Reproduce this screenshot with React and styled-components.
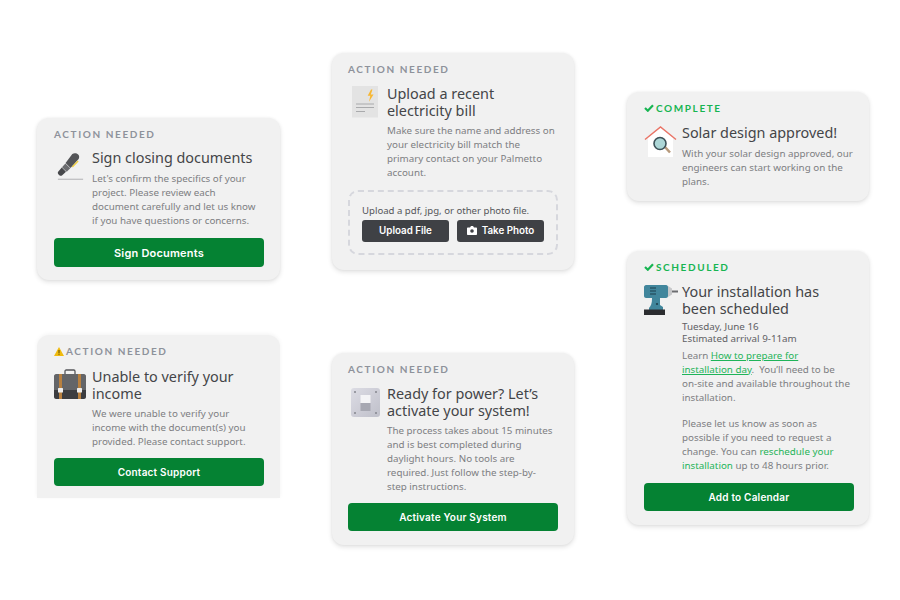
import React from "react";
import styled, { createGlobalStyle } from "styled-components";

const Global = createGlobalStyle`
  html, body { margin: 0; padding: 0; background: #fff; }
  body { font-family: "Lato", "Liberation Sans", sans-serif; }
`;

const Page = styled.div`
  width: 900px;
  height: 600px;
  overflow: hidden;
  display: flex;
  align-items: flex-start;
  gap: 52px;
  padding-left: 37px;
  box-sizing: border-box;
`;

const Column = styled.div`
  box-sizing: border-box;
  width: 243px;
  display: flex;
  flex-direction: column;
  padding-top: ${(p) => p.$top}px;
  padding-right: ${(p) => p.$pr ?? 0}px;
  gap: ${(p) => p.$gap}px;
`;

const Card = styled.section`
  box-sizing: border-box;
  height: ${(p) => p.$h}px;
  background: #f1f1f1;
  border-radius: ${(p) => (p.$cut ? "12px 12px 0 0" : "12px")};
  box-shadow: ${(p) =>
    p.$cut
      ? "0 -1px 4px rgba(0,0,0,0.05)"
      : "0 2px 5px rgba(0,0,0,0.12), 0 0 3px rgba(0,0,0,0.05)"};
  padding: 10px 16px 0 ${(p) => p.$pl ?? 17}px;
  display: flex;
  flex-direction: column;
`;

const Eyebrow = styled.div`
  display: flex;
  align-items: center;
  gap: 2px;
  height: 12px;
  font-size: 10px;
  font-weight: 700;
  letter-spacing: 1.6px;
  color: ${(p) => (p.$done ? "#17b552" : "#8e929b")};
`;

const Row = styled.div`
  display: flex;
  margin-top: ${(p) => p.$mt ?? 10}px;
`;

const IconSlot = styled.div`
  flex: 0 0 ${(p) => p.$w ?? 38}px;
  box-sizing: border-box;
  padding: ${(p) => p.$y ?? 0}px 0 0 ${(p) => p.$x ?? 0}px;
`;

const Body = styled.div`
  flex: 1;
  min-width: 0;
`;

const Title = styled.h3`
  margin: 0 0 ${(p) => (p.$two ? 4.5 : 5.5)}px;
  font-size: 14.4px;
  line-height: 16.5px;
  font-weight: 400;
  color: #444548;
  font-family: "Noto Sans", sans-serif;
  white-space: nowrap;
`;

const Text = styled.p`
  margin: 0;
  font-family: "Noto Sans", sans-serif;
  font-size: 9.8px;
  line-height: 14px;
  color: #7d7e82;
  white-space: nowrap;
`;

const DateText = styled(Text)`
  color: #5f6064;
  margin: -1px 0 4px;
  line-height: 12px;
`;

const Gap = styled.div`
  height: 12.5px;
`;

const Link = styled.a`
  color: #1fb459;
  text-decoration: ${(p) => (p.$under ? "underline" : "none")};
`;

const Primary = styled.button`
  box-sizing: border-box;
  display: block;
  width: 210px;
  height: ${(p) => p.$h ?? 28}px;
  margin-top: ${(p) => p.$mt ?? 10}px;
  border: 0;
  border-radius: 4px;
  background: #058233;
  color: #fff;
  font-family: "Inter", sans-serif;
  font-weight: 600;
  font-size: ${(p) => p.$fs ?? 10}px;
  letter-spacing: 0.2px;
`;

const DropZone = styled.div`
  box-sizing: border-box;
  width: 210px;
  height: 65px;
  margin-top: 10px;
  padding: 12px 10px 0 12px;
  border: 2px dashed #d6d7dd;
  border-radius: 10px;
`;

const DropText = styled.div`
  font-family: "Noto Sans", sans-serif;
  font-size: 9.6px;
  line-height: 13px;
  color: #55565a;
  white-space: nowrap;
`;

const DropButtons = styled.div`
  display: flex;
  gap: 8px;
  margin-top: 3px;
`;

const Dark = styled.button`
  box-sizing: border-box;
  width: 87px;
  height: 22px;
  border: 0;
  border-radius: 3px;
  padding: 0;
  background: #3f4145;
  color: #fff;
  font-family: "Inter", sans-serif;
  font-weight: 600;
  font-size: 9.8px;
  display: flex;
  align-items: center;
  justify-content: center;
  gap: 5px;
`;

const Pen = () => (
  <svg width="27" height="30" viewBox="0 0 30 32">
    <path d="M17 1.500c2-1.500 5-1 6.500.5s1.500 3.700.3 5.400L15 17l-5.500-5.500z" fill="#545558" />
    <path d="M9.300 12l5.500 5.500-4 3.700-5.200-5z" fill="#6b6c6f" />
    <path d="M5.300 16.500l4.700 4.700-4.200 4c-.9.8-2.300.8-3.200 0L1.500 24c-.8-.9-.8-2.200 0-3z" fill="#47484b" />
    <path d="M17 16l6.500-6.700" stroke="#f2cf3d" strokeWidth="1.400" fill="none" />
    <rect x="1" y="29" width="28" height="1.200" fill="#b5b6b8" />
  </svg>
);

const Briefcase = () => (
  <svg width="32" height="30" viewBox="0 0 32 30">
    <path d="M11 6V2.200C11 1.500 11.500 1 12.200 1h7.600c.7 0 1.200.5 1.200 1.200V6" fill="none" stroke="#55565a" strokeWidth="1.300" />
    <path d="M2 5h28c1 0 2 1 2 2v15H0V7c0-1 1-2 2-2z" fill="#646568" />
    <path d="M0 21h32v7c0 1-1 2-2 2H2c-1 0-2-1-2-2z" fill="#3c3d40" />
    <rect x="5" y="5" width="3" height="25" fill="#b8803f" />
    <rect x="24" y="5" width="3" height="25" fill="#b8803f" />
    <rect x="4" y="19" width="5" height="4.500" rx=".5" fill="#ededed" />
    <rect x="23" y="19" width="5" height="4.500" rx=".5" fill="#ededed" />
  </svg>
);

const Bill = () => (
  <svg width="27" height="32" viewBox="0 0 27 32">
    <rect width="26" height="31.500" fill="#e3e3e3" />
    <path d="M19 3.500l-3.300 6.300h2.600l-1.300 6 4.500-7.300h-2.700l1.700-5z" fill="#f7b733" />
    <path d="M4 18h18M4 21.500h18M4 25.500h9" stroke="#a9aaac" strokeWidth="1" />
  </svg>
);

const Toggle = () => (
  <svg width="29" height="29" viewBox="0 0 29 29">
    <defs>
      <linearGradient id="plate" x1="0" y1="0" x2="1" y2="1">
        <stop offset="0" stopColor="#dcdce4" />
        <stop offset="1" stopColor="#bfc0ca" />
      </linearGradient>
    </defs>
    <rect width="29" height="29" rx="3" fill="url(#plate)" />
    <circle cx="4" cy="4" r="1" fill="#85868e" />
    <circle cx="25" cy="4" r="1" fill="#85868e" />
    <circle cx="4" cy="25" r="1" fill="#85868e" />
    <circle cx="25" cy="25" r="1" fill="#85868e" />
    <rect x="9.500" y="7" width="10" height="8" fill="#f4f4f6" />
    <rect x="9.500" y="15" width="10" height="8" fill="#a7a8b2" />
  </svg>
);

const House = () => (
  <svg width="33" height="31" viewBox="0 0 33 31">
    <path d="M4 11.500L16.500 2 29 11.500V31H4z" fill="#fff" />
    <path d="M1 13.500L16.500 1 32 13.500" fill="none" stroke="#ea7466" strokeWidth="1.400" />
    <path d="M21 21l5 5.500" stroke="#b79a7c" strokeWidth="2.600" />
    <circle cx="16" cy="17.500" r="6" fill="#acd6d6" stroke="#3c5158" strokeWidth="1.600" />
  </svg>
);

const Drill = () => (
  <svg width="34" height="32" viewBox="0 0 34 32">
    <path d="M2 1h20c1.400 0 2 1 2 2v9c0 1-1 2-2 2H16v7l3 2v3H5v-2c2-2 3-5 3-9V14H2c-1 0-2-1-2-2V3c0-1 1-2 2-2z" fill="#41869c" />
    <path d="M24 2l4 2.500v6L24 13z" fill="#c7c8ca" />
    <rect x="28" y="6.500" width="6" height="2" fill="#6c6d70" />
    <path d="M6 4h6M6 7h6M6 10h6" stroke="#1d3f4d" strokeWidth="1.100" />
    <rect y="25.500" x="0" width="21" height="5.500" fill="#2c2d30" />
    <circle cx="13" cy="20" r="1.100" fill="#1d3f4d" />
  </svg>
);

const Warn = () => (
  <svg width="10" height="9" viewBox="0 0 10 9">
    <path d="M5 0l5 9H0z" fill="#f0bb0f" />
    <rect x="4.500" y="3" width="1" height="3.200" fill="#5b4a08" />
    <rect x="4.500" y="6.800" width="1" height="1" fill="#5b4a08" />
  </svg>
);

const Check = () => (
  <svg width="10" height="8" viewBox="0 0 10 8">
    <path d="M1 4l2.800 2.700L9 1.200" fill="none" stroke="#17b552" strokeWidth="2.200" />
  </svg>
);

const Camera = () => (
  <svg width="10" height="9" viewBox="0 0 10 9">
    <path d="M1 1.500h2L4 0h2l1 1.500h2c.6 0 1 .4 1 1V8c0 .6-.4 1-1 1H1c-.6 0-1-.4-1-1V2.500c0-.6.4-1 1-1z" fill="#fff" />
    <circle cx="5" cy="5" r="1.800" fill="#3f4145" />
  </svg>
);

export default function App() {
  return (
    <>
      <Global />
      <Page>
        <Column $top={118} $gap={55}>
          <Card $h={162}>
            <Eyebrow>ACTION NEEDED</Eyebrow>
            <Row>
              <IconSlot $x={3} $y={2}><Pen /></IconSlot>
              <Body>
                <Title>Sign closing documents</Title>
                <Text>
                  Let's confirm the specifics of your<br />
                  project. Please review each<br />
                  document carefully and let us know<br />
                  if you have questions or concerns.
                </Text>
              </Body>
            </Row>
            <Primary $h={29} $fs={11}>Sign Documents</Primary>
          </Card>
          <Card $h={163} $cut>
            <Eyebrow><Warn />ACTION NEEDED</Eyebrow>
            <Row $mt={12}>
              <IconSlot><Briefcase /></IconSlot>
              <Body>
                <Title $two>Unable to verify your<br />income</Title>
                <Text>
                  We were unable to verify your<br />
                  income with the document(s) you<br />
                  provided. Please contact support.
                </Text>
              </Body>
            </Row>
            <Primary $mt={9}>Contact Support</Primary>
          </Card>
        </Column>

        <Column $top={53} $gap={83} $pr={1}>
          <Card $h={217} $pl={16}>
            <Eyebrow>ACTION NEEDED</Eyebrow>
            <Row $mt={11}>
              <IconSlot $w={39} $x={4}><Bill /></IconSlot>
              <Body>
                <Title $two>Upload a recent<br />electricity bill</Title>
                <Text>
                  Make sure the name and address on<br />
                  your electricity bill match the<br />
                  primary contact on your Palmetto<br />
                  account.
                </Text>
              </Body>
            </Row>
            <DropZone>
              <DropText>Upload a pdf, jpg, or other photo file.</DropText>
              <DropButtons>
                <Dark>Upload File</Dark>
                <Dark><Camera />Take Photo</Dark>
              </DropButtons>
            </DropZone>
          </Card>
          <Card $h={192} $pl={16}>
            <Eyebrow>ACTION NEEDED</Eyebrow>
            <Row $mt={11}>
              <IconSlot $w={39} $x={3} $y={2}><Toggle /></IconSlot>
              <Body>
                <Title $two>Ready for power? Let’s<br />activate your system!</Title>
                <Text>
                  The process takes about 15 minutes<br />
                  and is best completed during<br />
                  daylight hours. No tools are<br />
                  required. Just follow the step-by-<br />
                  step instructions.
                </Text>
              </Body>
            </Row>
            <Primary $mt={9}>Activate Your System</Primary>
          </Card>
        </Column>

        <Column $top={92} $gap={50} $pr={1}>
          <Card $h={109}>
            <Eyebrow $done><Check />COMPLETE</Eyebrow>
            <Row $mt={11}>
              <IconSlot $y={1}><House /></IconSlot>
              <Body>
                <Title>Solar design approved!</Title>
                <Text>
                  With your solar design approved, our<br />
                  engineers can start working on the<br />
                  plans.
                </Text>
              </Body>
            </Row>
          </Card>
          <Card $h={274}>
            <Eyebrow $done><Check />SCHEDULED</Eyebrow>
            <Row $mt={11}>
              <IconSlot><Drill /></IconSlot>
              <Body>
                <Title $two>Your installation has<br />been scheduled</Title>
                <DateText>Tuesday, June 16<br />Estimated arrival 9-11am</DateText>
                <Text>
                  Learn <Link $under>How to prepare for</Link><br />
                  <Link $under>installation day</Link>.&nbsp; You’ll need to be<br />
                  on-site and available throughout the<br />
                  installation.
                </Text>
                <Gap />
                <Text>
                  Please let us know as soon as<br />
                  possible if you need to request a<br />
                  change. You can <Link>reschedule your</Link><br />
                  <Link>installation</Link> up to 48 hours prior.
                </Text>
              </Body>
            </Row>
            <Primary>Add to Calendar</Primary>
          </Card>
        </Column>
      </Page>
    </>
  );
}
